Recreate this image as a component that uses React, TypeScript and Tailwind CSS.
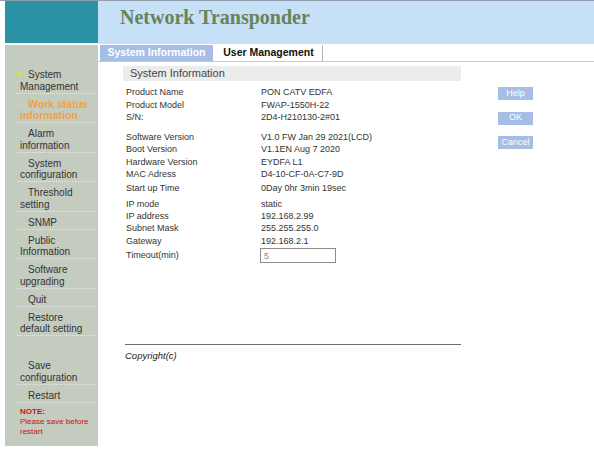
import React from "react";

const sans = { fontFamily: '"Liberation Sans", Arial, sans-serif' };

function Item({
  l1,
  l2,
  marker,
  active,
}: {
  l1: string;
  l2?: string;
  marker?: boolean;
  active?: boolean;
}) {
  return (
    <div
      className={
        "relative ml-[12px] w-[78px] border-b border-dotted border-[#e6e9e3] pl-[3px] pt-[5px] pb-[0.5px] leading-[11.5px] whitespace-nowrap " +
        (active
          ? "text-[10.5px] font-bold text-[#f2a23e]"
          : "text-[10px] text-[#333]")
      }
    >
      {marker && (
        <span className="absolute left-[1px] top-[7px] h-0 w-0 border-y-[3.5px] border-l-[4px] border-y-transparent border-l-[#e8e02a]" />
      )}
      <div className="pl-[8px]">{l1}</div>
      {l2 && <div>{l2}</div>}
    </div>
  );
}

function Row({ label, value }: { label: string; value: string }) {
  return (
    <div className="flex h-[12.4px] items-center">
      <div className="w-[135px]">{label}</div>
      <div>{value}</div>
    </div>
  );
}

export default function App() {
  return (
    <div
      className="flex h-[451px] w-[594px] overflow-hidden border-t border-[#8e9cab] bg-white pl-[5px]"
      style={sans}
    >
      <aside className="flex w-[93px] flex-col">
        <div className="h-[42px] bg-[#2992a5]" />
        <div className="mt-[2px] h-[401px] bg-[#c4cbbf] pt-[19px]">
          <Item l1="System" l2="Management" marker />
          <Item l1="Work status" l2="information" active />
          <Item l1="Alarm" l2="information" />
          <Item l1="System" l2="configuration" />
          <Item l1="Threshold" l2="setting" />
          <Item l1="SNMP" />
          <Item l1="Public" l2="Information" />
          <Item l1="Software" l2="upgrading" />
          <Item l1="Quit" />
          <Item l1="Restore" l2="default setting" />
          <div className="h-[19px]" />
          <Item l1="Save" l2="configuration" />
          <Item l1="Restart" />
          <div className="ml-[12px] mt-[4px] pl-[3px] text-[8px] leading-[10px] text-[#cc1111]">
            <div className="font-bold">NOTE:</div>
            <div>Please save before</div>
            <div>restart</div>
          </div>
        </div>
      </aside>

      <main className="flex flex-1 flex-col">
        <header className="h-[43px] bg-[#c6e0f8] pl-[22px] pt-[6px]">
          <div
            className="text-[20px] font-bold leading-none text-[#6a8259]"
            style={{ fontFamily: '"Liberation Serif", "Times New Roman", serif' }}
          >
            Network Transponder
          </div>
        </header>

        <div className="flex h-[18px] items-end border-b border-[#c9c9c9] pl-[2px] text-[10.5px] font-bold">
          <div className="flex h-[16px] w-[113px] items-center justify-center bg-[#a5bee6] text-white">
            System Information
          </div>
          <div className="ml-[2px] flex h-[16px] w-[108px] items-center justify-center border-r border-[#b5b5b5] text-[#111]">
            User Management
          </div>
        </div>

        <div className="flex pl-[25px]">
          <div className="w-[338px]">
            <div className="mt-[4px] flex h-[15px] items-center bg-[#ececec] pl-[7px] text-[11px] text-[#444]">
              System Information
            </div>
            <div className="pl-[3px] text-[9px] text-[#333]">
              <div className="mt-[6px]">
                <Row label="Product Name" value="PON CATV EDFA" />
                <Row label="Product Model" value="FWAP-1550H-22" />
                <Row label="S/N:" value="2D4-H210130-2#01" />
              </div>
              <div className="mt-[7.3px]">
                <Row label="Software Version" value="V1.0 FW Jan 29 2021(LCD)" />
                <Row label="Boot Version" value="V1.1EN Aug 7 2020" />
                <Row label="Hardware Version" value="EYDFA L1" />
                <Row label="MAC Adress" value="D4-10-CF-0A-C7-9D" />
              </div>
              <div className="mt-[1.6px]">
                <Row label="Start up Time" value=" 0Day 0hr 3min 19sec" />
              </div>
              <div className="mt-[3.2px]">
                <Row label="IP mode" value="static" />
                <Row label="IP address" value="192.168.2.99" />
                <Row label="Subnet Mask" value="255.255.255.0" />
                <Row label="Gateway" value="192.168.2.1" />
              </div>
              <div className="flex h-[16px] items-center">
                <div className="w-[134px]">Timeout(min)</div>
                <input
                  readOnly
                  value="5"
                  className="h-[15px] w-[76px] border border-[#8c8c8c] bg-white pl-[3px] text-[9px] text-[#888] outline-none"
                />
              </div>
            </div>
            <div className="ml-[2px] mt-[80.5px] h-px bg-[#6f6f6f]" />
            <div className="ml-[2px] mt-[5px] text-[9.5px] italic leading-[11px] text-[#222]">
              Copyright(c)
            </div>
          </div>

          <div className="ml-[37px] flex flex-col gap-[11.5px] pt-[25px] text-[9px] text-white">
            <div className="flex h-[13px] w-[35px] items-center justify-center bg-[#a5bee6]">
              Help
            </div>
            <div className="flex h-[13px] w-[35px] items-center justify-center bg-[#a5bee6]">
              OK
            </div>
            <div className="flex h-[13px] w-[35px] items-center justify-center bg-[#a5bee6]">
              Cancel
            </div>
          </div>
        </div>
      </main>
    </div>
  );
}
